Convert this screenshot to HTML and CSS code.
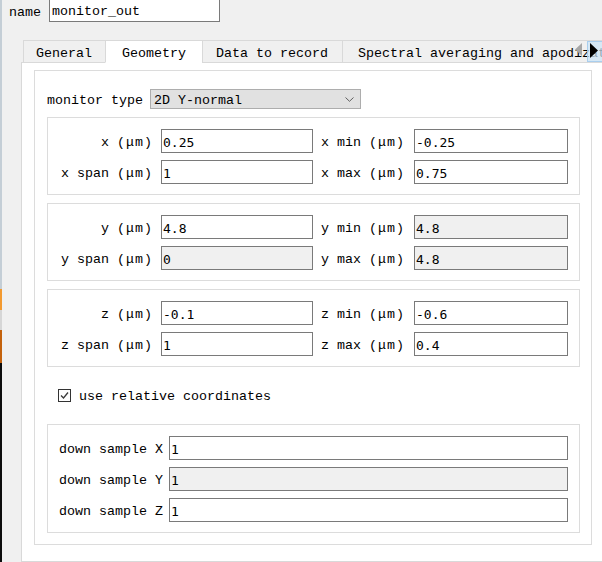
FILE: index.html
```html
<!DOCTYPE html>
<html>
<head>
<meta charset="utf-8">
<link rel="stylesheet" href="styles.css">
</head>
<body>
<div class="app">
  <div class="edge"></div>
  <div class="main">
    <div class="name-row">
      <span class="lbl name-lbl">name</span>
      <div class="field name-field">monitor_out</div>
    </div>
    <div class="tabbar">
      <div class="tab t-general">General</div>
      <div class="tab active">Geometry</div>
      <div class="tab t-data">Data to record</div>
      <div class="tab t-spec">Spectral averaging and apodization</div>
      <div class="scroll-btn left"><svg width="12" height="22" viewBox="0 0 12 22"><polygon points="0,9.5 7,3 7,16" fill="#a6a6a6"/></svg></div>
      <div class="scroll-btn right"><svg width="13" height="20" viewBox="0 0 13 20"><polygon points="2,1 10,8.5 2,16" fill="#000"/></svg></div>
    </div>
    <div class="pane">
      <div class="frame">
        <div class="type-row">
          <span class="lbl">monitor type</span>
          <div class="combo"><span class="combo-text">2D Y-normal</span><svg width="9" height="5" viewBox="0 0 9 5"><polyline points="0.5,0.5 4.5,4.3 8.5,0.5" fill="none" stroke="#606060" stroke-width="1"/></svg></div>
        </div>

        <div class="group coords">
          <span class="lbl r">x <span class="u">(μm)</span></span>
          <div class="field">0.25</div>
          <span class="lbl">x min <span class="u">(μm)</span></span>
          <div class="field">-0.25</div>
          <span class="lbl r">x span <span class="u">(μm)</span></span>
          <div class="field">1</div>
          <span class="lbl">x max <span class="u">(μm)</span></span>
          <div class="field">0.75</div>
        </div>

        <div class="group coords">
          <span class="lbl r">y <span class="u">(μm)</span></span>
          <div class="field">4.8</div>
          <span class="lbl">y min <span class="u">(μm)</span></span>
          <div class="field dis">4.8</div>
          <span class="lbl r">y span <span class="u">(μm)</span></span>
          <div class="field dis">0</div>
          <span class="lbl">y max <span class="u">(μm)</span></span>
          <div class="field dis">4.8</div>
        </div>

        <div class="group coords">
          <span class="lbl r">z <span class="u">(μm)</span></span>
          <div class="field">-0.1</div>
          <span class="lbl">z min <span class="u">(μm)</span></span>
          <div class="field">-0.6</div>
          <span class="lbl r">z span <span class="u">(μm)</span></span>
          <div class="field">1</div>
          <span class="lbl">z max <span class="u">(μm)</span></span>
          <div class="field">0.4</div>
        </div>

        <div class="check-row">
          <div class="checkbox"><svg width="11" height="11" viewBox="0 0 11 11"><polyline points="2,5.5 4.5,8 9,2.5" fill="none" stroke="#3a3a3a" stroke-width="1.3"/></svg></div>
          <span class="lbl">use relative coordinates</span>
        </div>

        <div class="group ds">
          <span class="lbl">down sample X</span>
          <div class="field">1</div>
          <span class="lbl">down sample Y</span>
          <div class="field dis">1</div>
          <span class="lbl">down sample Z</span>
          <div class="field">1</div>
        </div>
      </div>
    </div>
  </div>
</div>
</body>
</html>
```

FILE: styles.css
```css
* { box-sizing: border-box; }

body {
  margin: 0;
  width: 602px;
  height: 562px;
  overflow: hidden;
  background: #f0f0f0;
  font-family: "Liberation Mono", "DejaVu Sans Mono", monospace;
  font-size: 13.333px;
  color: #000;
}

.app {
  display: flex;
  height: 562px;
}

.edge {
  flex: none;
  width: 2px;
  background: linear-gradient(to bottom,
    #c4ced6 0, #c4ced6 289px,
    #f39a30 289px, #f39a30 310px,
    #d6d6d6 310px, #d6d6d6 330px,
    #c4620c 330px, #c4620c 363px,
    #0c0c0c 363px);
}

.main {
  flex: 1;
  min-width: 0;
  display: flex;
  flex-direction: column;
}

.lbl {
  white-space: nowrap;
  line-height: 16px;
  padding-top: 3px;
}

.lbl.r { text-align: right; }

.u { letter-spacing: 1px; }

.name-row {
  display: flex;
  align-items: center;
  gap: 8px;
  height: 23px;
  margin-top: -1px;
  padding-left: 7px;
}

.name-lbl { padding-top: 4px; }

.field {
  height: 24px;
  border: 1px solid #7a7a7a;
  background: #fff;
  display: flex;
  align-items: center;
  padding: 2px 0 0 1px;
  font-family: "DejaVu Sans Mono", monospace;
  font-size: 13px;
  white-space: nowrap;
  overflow: hidden;
}

.field.dis { background: #f0f0f0; }

.name-field {
  width: 171px;
  height: 23px;
  padding: 2px 0 0 2px;
  font-family: "Liberation Mono", monospace;
  font-size: 13.333px;
}

.tabbar {
  position: relative;
  z-index: 1;
  display: flex;
  height: 23px;
  margin: 18px 0 -1px 21px;
  overflow: hidden;
}

.tab {
  flex: none;
  height: 23px;
  display: flex;
  align-items: center;
  border: 1px solid #d9d9d9;
  border-right: none;
  background: #f0f0f0;
  white-space: nowrap;
  padding: 3px 13px 0 12px;
}

.tab.active {
  background: #fff;
  border-bottom-color: #fff;
  padding: 3px 16px 0 16px;
}

.t-data { padding: 3px 14px 0 13px; }
.t-spec { padding: 3px 15px 0 15px; }

.scroll-btn {
  position: absolute;
  top: 0;
  height: 22px;
}

.scroll-btn.left {
  left: 552px;
  width: 12px;
}

.scroll-btn.right {
  left: 564px;
  top: 1px;
  width: 15px;
  height: 21px;
  background: rgba(204, 228, 247, 0.72);
  border: 1px solid rgba(150, 195, 235, 0.7);
  border-right: none;
}

.scroll-btn svg { display: block; }

.pane {
  width: 600px;
  height: 500px;
  margin-left: 19px;
  border: 1px solid #d9d9d9;
  background: #fff;
  padding: 7px 0 16px 12px;
}

.frame {
  width: 558px;
  height: 475px;
  border: 1px solid #dcdcdc;
  padding: 18px 11px 11px 12px;
  display: flex;
  flex-direction: column;
}

.type-row {
  display: flex;
  align-items: center;
  gap: 7px;
  height: 20px;
}

.combo {
  width: 211px;
  height: 20px;
  border: 1px solid #adadad;
  background: #e1e1e1;
  display: flex;
  align-items: center;
  justify-content: space-between;
  padding: 0 6px 0 3px;
  white-space: nowrap;
}

.combo-text { padding-top: 2px; }

.combo svg { display: block; }

.group {
  margin-top: 8px;
  border: 1px solid #dcdcdc;
  padding: 11px 11px 10px 11px;
  display: grid;
  column-gap: 8px;
  row-gap: 7px;
  align-items: center;
}

.coords {
  grid-template-columns: 94px 152px 85px 1fr;
}

.ds {
  margin-top: 0;
  grid-template-columns: 103px 1fr;
  column-gap: 7px;
}

.check-row {
  display: flex;
  align-items: center;
  gap: 8px;
  height: 13px;
  margin: 22px 0 22px 11px;
}

.checkbox {
  width: 13px;
  height: 13px;
  border: 1px solid #333;
  background: #fff;
}

.checkbox svg { display: block; }
```
